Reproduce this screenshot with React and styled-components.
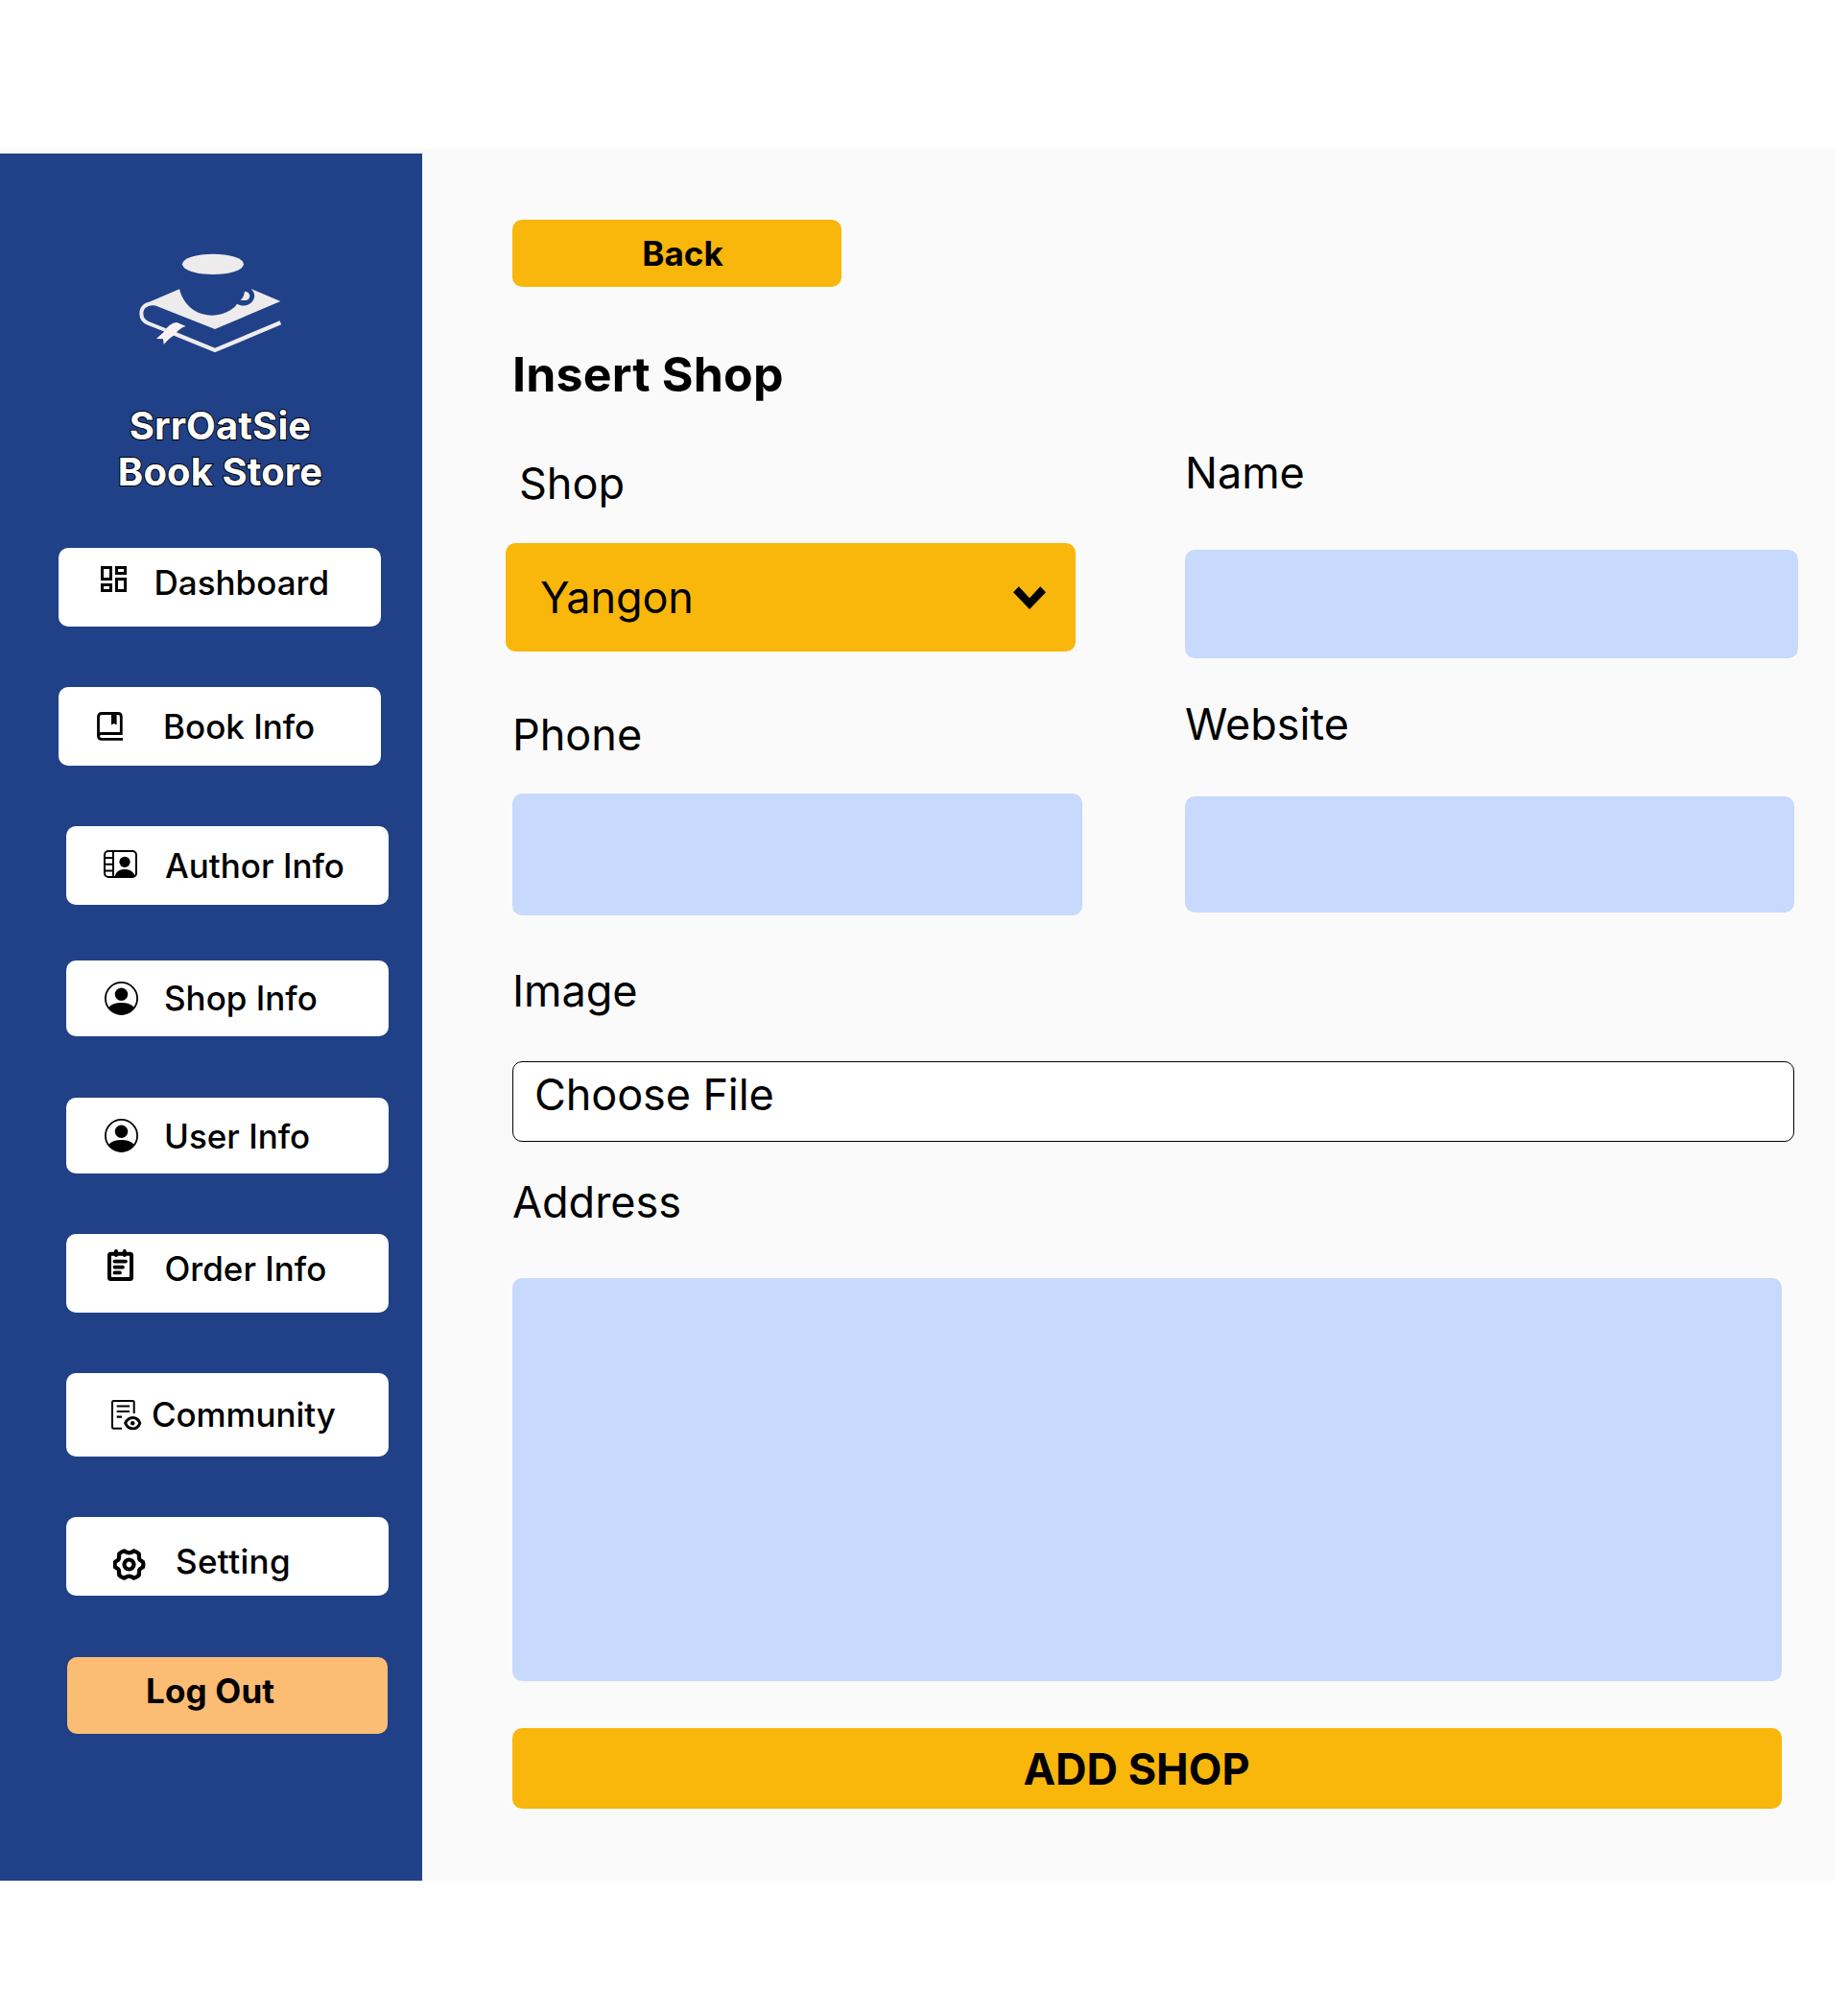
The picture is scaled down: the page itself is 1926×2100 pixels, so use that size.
import React from "react";
import styled, { createGlobalStyle } from "styled-components";

const GlobalStyle = createGlobalStyle`
  *, *::before, *::after { box-sizing: border-box; }
  body { margin: 0; background: #ffffff; color: #000000; font-family: Inter, "Liberation Sans", sans-serif; }
  button, input, textarea { font: inherit; color: inherit; border: 0; padding: 0; margin: 0; outline: none; }
`;

const Page = styled.div`
  width: 1926px;
  height: 2100px;
  padding-top: 155px;
  overflow: hidden;
`;

const Board = styled.div`
  display: flex;
  width: 1913px;
  height: 1805px;
  background: #fafafa;
`;

const Sidebar = styled.aside`
  display: flex;
  flex-direction: column;
  width: 440px;
  margin-top: 5px;
  background: #204187;
`;

const Logo = styled.svg`
  flex: none;
  display: block;
  width: 154px;
  height: 110px;
  margin: 101px 0 0 143px;
`;

const Brand = styled.h1`
  width: 260px;
  margin: 49px 0 0 99.5px;
  color: #ffffff;
  font-size: 40px;
  font-weight: 700;
  line-height: 48px;
  letter-spacing: 0.1px;
  text-align: center;
  -webkit-text-stroke: 2px #000000;
  paint-order: stroke fill;
`;

const Nav = styled.nav`
  display: flex;
  flex-direction: column;
  margin-top: 55px;
`;

const NavItem = styled.a`
  display: flex;
  align-items: flex-start;
  width: 336px;
  height: ${(p) => p.$height}px;
  margin: ${(p) => p.$gap}px 0 0 ${(p) => p.$left}px;
  background: #ffffff;
  border-radius: 10px;
`;

const IconSlot = styled.span`
  display: flex;
  flex: none;
  width: 40px;
  height: 40px;
  margin: ${(p) => p.$top}px 0 0 ${(p) => p.$left}px;
`;

const NavText = styled.span`
  margin: ${(p) => p.$top}px 0 0 ${(p) => p.$left}px;
  font-size: 35px;
  font-weight: 500;
  line-height: 42px;
  letter-spacing: ${(p) => p.$tracking || 0}px;
  white-space: nowrap;
`;

const LogoutButton = styled.button`
  width: 334px;
  height: 80px;
  margin: 64px 0 0 70px;
  padding: 14px 0 24px 82px;
  background: #fbbc74;
  border-radius: 10px;
  font-size: 35px;
  font-weight: 700;
  line-height: 42px;
  letter-spacing: 0.15px;
  text-align: left;
`;

const Main = styled.main`
  display: flex;
  flex-direction: column;
  align-items: flex-start;
  flex: 1;
  padding: 74px 0 0 94px;
`;

const BackButton = styled.button`
  width: 343px;
  height: 70px;
  padding-left: 12px;
  background: #f9b60b;
  border-radius: 10px;
  font-size: 35px;
  font-weight: 700;
  line-height: 42px;
`;

const Title = styled.h2`
  margin: 61px 0 0;
  font-size: 50px;
  font-weight: 700;
  line-height: 60px;
  letter-spacing: 0.2px;
`;

const Columns = styled.div`
  display: grid;
  grid-template-columns: 701px 639px;
  align-items: start;
`;

const Column = styled.div`
  display: flex;
  flex-direction: column;
`;

const Label = styled.label`
  display: block;
  height: 55px;
  margin: ${(p) => p.$top}px 0 0 ${(p) => p.$left || 0}px;
  font-size: 45px;
  font-weight: 400;
  line-height: 55px;
`;

const Select = styled.button`
  display: flex;
  align-items: center;
  justify-content: space-between;
  width: 594px;
  height: 113px;
  margin: 35px 0 0 -7px;
  padding: 0 31px 0 36px;
  background: #f9b60b;
  border-radius: 10px;
  font-size: 45px;
  line-height: 55px;
  letter-spacing: -0.1px;
`;

const Chevron = styled.svg`
  display: block;
  width: 34px;
  height: 24px;
`;

const Input = styled.input`
  display: block;
  width: ${(p) => p.$width}px;
  height: ${(p) => p.$height}px;
  margin-top: ${(p) => p.$top}px;
  background: #c7d9fd;
  border-radius: 10px;
`;

const FilePicker = styled.button`
  width: 1336px;
  height: 84px;
  margin-top: 46px;
  padding: 6px 0 21px 22px;
  background: #ffffff;
  border: 1px solid #000000;
  border-radius: 10px;
  font-size: 45px;
  line-height: 55px;
  letter-spacing: -0.1px;
  text-align: left;
`;

const AddressArea = styled.textarea`
  display: block;
  width: 1323px;
  height: 420px;
  margin-top: 52px;
  background: #c7d9fd;
  border-radius: 10px;
  resize: none;
`;

const SubmitButton = styled.button`
  width: 1323px;
  height: 84px;
  margin-top: 49px;
  padding: 0 22px 0 0;
  background: #f9b60b;
  border-radius: 10px;
  font-size: 45px;
  font-weight: 700;
  line-height: 55px;
`;

const Glyph = ({ children }) => (
  <svg width="40" height="40" viewBox="0 0 40 40" fill="none" stroke="#000" aria-hidden="true">
    {children}
  </svg>
);

const DashboardIcon = () => (
  <Glyph>
    <g strokeWidth="3">
      <path d="M1.5 1.5h9v12h-9zM16.5 1.5h9v6h-9zM16.5 13.5h9v12h-9zM1.5 19.5h9v6h-9z" />
    </g>
  </Glyph>
);

const BookIcon = () => (
  <Glyph>
    <path d="M1.5 25V5Q1.5 1.5 5 1.5h17q3.3 0 3.3 3.3v17.7H5Q1.5 22.5 1.5 25Q1.5 28.3 5 28.3H27" strokeWidth="2.8" />
    <path d="M15 2h5.6v11.6l-2.8-1.5-2.8 1.5z" fill="#000" stroke="none" />
  </Glyph>
);

const AuthorIcon = () => (
  <Glyph>
    <rect x="1" y="1" width="33" height="27" rx="4" strokeWidth="2" />
    <path d="M10 1v27M1 8h9M1 14.7h9M1 21.4h9" strokeWidth="2" />
    <circle cx="22" cy="12.3" r="5.6" fill="#000" stroke="none" />
    <path d="M11.5 28.2c1-5.7 5-8.2 10.5-8.2s9.500 2.500 10.800 7.600q-1 .6-2.500 .6z" fill="#000" stroke="none" />
  </Glyph>
);

const PersonIcon = () => (
  <Glyph>
    <circle cx="17.500" cy="17.500" r="16.600" strokeWidth="1.800" />
    <circle cx="17.500" cy="13.300" r="6.700" fill="#000" stroke="none" />
    <path d="M4.500 26.500C7.500 23.300 12 21.900 17.500 21.900S27.500 23.300 30.500 26.500C27.500 31.500 23 34.500 17.500 34.500S7.500 31.500 4.500 26.500Z" fill="#000" stroke="none" />
  </Glyph>
);

const OrderIcon = () => (
  <Glyph>
    <rect x="2" y="4.700" width="23" height="26.300" rx="1.500" strokeWidth="4" />
    <path d="M9 2v4M17.800 2v4" strokeWidth="4" strokeLinecap="round" />
    <path d="M7.500 12.600h11.500M7.500 18.600h8.500M7.500 24.400h5.500" strokeWidth="3.700" strokeLinecap="round" />
  </Glyph>
);

const CommunityIcon = () => (
  <Glyph>
    <path d="M23.700 14V2.500Q23.700 1 22.200 1H2.500Q1 1 1 2.500V28Q1 29.700 2.500 29.700H11" strokeWidth="2" />
    <path d="M5.700 6.500h13.300M5.700 12h13.300M5.700 17.700h5.300" strokeWidth="2.200" />
    <path d="M14.600 24.200C18 16.600 27 16.600 29.800 24.200C27 31.800 18 31.800 14.600 24.200Z" strokeWidth="2.900" strokeLinejoin="round" />
    <circle cx="22.200" cy="24.200" r="2.200" fill="#000" stroke="none" />
  </Glyph>
);

const SettingIcon = () => (
  <Glyph>
    <g transform="translate(16.500 16.500)">
      <path
        d="M14.400 -2.800C15 -1 15 1 14.400 2.800L11.300 4.700Q10.400 6 10.500 7.200L10.300 11Q8 13.500 5 14.200L1.700 12.400Q0 11.900 -1.700 12.400L-5 14.200Q-8 13.500 -10.300 11L-10.500 7.200Q-10.400 6 -11.300 4.700L-14.400 2.800C-15 1 -15 -1 -14.400 -2.800L-11.300 -4.700Q-10.400 -6 -10.500 -7.200L-10.300 -11Q-8 -13.500 -5 -14.200L-1.700 -12.400Q0 -11.900 1.700 -12.400L5 -14.200Q8 -13.500 10.300 -11L10.500 -7.200Q10.400 -6 11.300 -4.700Z"
        strokeWidth="4.200"
        strokeLinejoin="round"
      />
      <circle r="5" strokeWidth="4.200" />
    </g>
  </Glyph>
);

const navItems = [
  { text: "Dashboard", icon: DashboardIcon, left: 61, gap: 0, height: 82, iconAt: [44, 19], textAt: [15.5, 15] },
  { text: "Book Info", icon: BookIcon, left: 61, gap: 63, height: 82, iconAt: [40, 26], textAt: [29, 20] },
  { text: "Author Info", icon: AuthorIcon, left: 69, gap: 63, height: 82, iconAt: [39, 25], textAt: [24, 20] },
  { text: "Shop Info", icon: PersonIcon, left: 69, gap: 58, height: 79, iconAt: [40, 22], textAt: [22, 18] },
  { text: "User Info", icon: PersonIcon, left: 69, gap: 64, height: 79, iconAt: [40, 22], textAt: [22, 19] },
  { text: "Order Info", icon: OrderIcon, left: 69, gap: 63, height: 82, iconAt: [43, 16], textAt: [19.5, 15] },
  { text: "Community", icon: CommunityIcon, left: 69, gap: 63, height: 87, iconAt: [47, 28], textAt: [2, 22], tracking: -0.1 },
  { text: "Setting", icon: SettingIcon, left: 69, gap: 63, height: 82, iconAt: [49, 33], textAt: [25, 25], tracking: 0.35 },
];

const BrandLogo = () => (
  <Logo viewBox="429 363 462 330" aria-hidden="true">
    <ellipse cx="666" cy="406" rx="96" ry="32" fill="#eeebed" />
    <path
      d="M470 523L561 484C567 510 584 535 606 550C642 573 688 570 720 550Q735 541 741 530C757 539 776 536 788 524C799 511 798 495 785 483L877 522L672 609L484 535L462 532Z"
      fill="#eeebed"
    />
    <path d="M765 491C779 492 784 503 779 512C773 521 762 520 752 518C761 510 763 502 765 491Z" fill="#eeebed" />
    <path d="M486 529C458 526 442 540 442 560C442 577 452 586 464 591L517 612" fill="none" stroke="#eeebed" strokeWidth="12" />
    <path d="M542 622L672 675L877 589" fill="none" stroke="#eeebed" strokeWidth="13" />
    <path d="M489 639L512 618Q530 589 553 588L581 600Q560 606 547 626Q530 636 512 657L510 640Z" fill="#fdf2f3" />
  </Logo>
);

export default function App() {
  return (
    <>
      <GlobalStyle />
      <Page>
        <Board>
          <Sidebar>
            <BrandLogo />
            <Brand>
              SrrOatSie
              <br />
              Book Store
            </Brand>
            <Nav>
              {navItems.map(({ text, icon: Icon, left, gap, height, iconAt, textAt, tracking }) => (
                <NavItem key={text} $left={left} $gap={gap} $height={height}>
                  <IconSlot $left={iconAt[0]} $top={iconAt[1]}>
                    <Icon />
                  </IconSlot>
                  <NavText $left={textAt[0]} $top={textAt[1]} $tracking={tracking}>{text}</NavText>
                </NavItem>
              ))}
            </Nav>
            <LogoutButton>Log Out</LogoutButton>
          </Sidebar>
          <Main>
            <BackButton>Back</BackButton>
            <Title>Insert Shop</Title>
            <Columns>
              <Column>
                <Label $top={56} $left={7}>Shop</Label>
                <Select>
                  Yangon
                  <Chevron viewBox="0 0 34 24" aria-hidden="true">
                    <path d="M0 6.200L5.800 .3L17 12.300L28.200 .3L34 6.200L17 24Z" />
                  </Chevron>
                </Select>
                <Label $top={59} htmlFor="phone">Phone</Label>
                <Input id="phone" $top={34} $width={594} $height={127} />
              </Column>
              <Column>
                <Label $top={45} htmlFor="name">Name</Label>
                <Input id="name" $top={53} $width={639} $height={113} />
                <Label $top={41} htmlFor="website">Website</Label>
                <Input id="website" $top={48} $width={635} $height={121} />
              </Column>
            </Columns>
            <Label $top={51}>Image</Label>
            <FilePicker>Choose File</FilePicker>
            <Label $top={35} htmlFor="address">Address</Label>
            <AddressArea id="address" />
            <SubmitButton>ADD SHOP</SubmitButton>
          </Main>
        </Board>
      </Page>
    </>
  );
}
